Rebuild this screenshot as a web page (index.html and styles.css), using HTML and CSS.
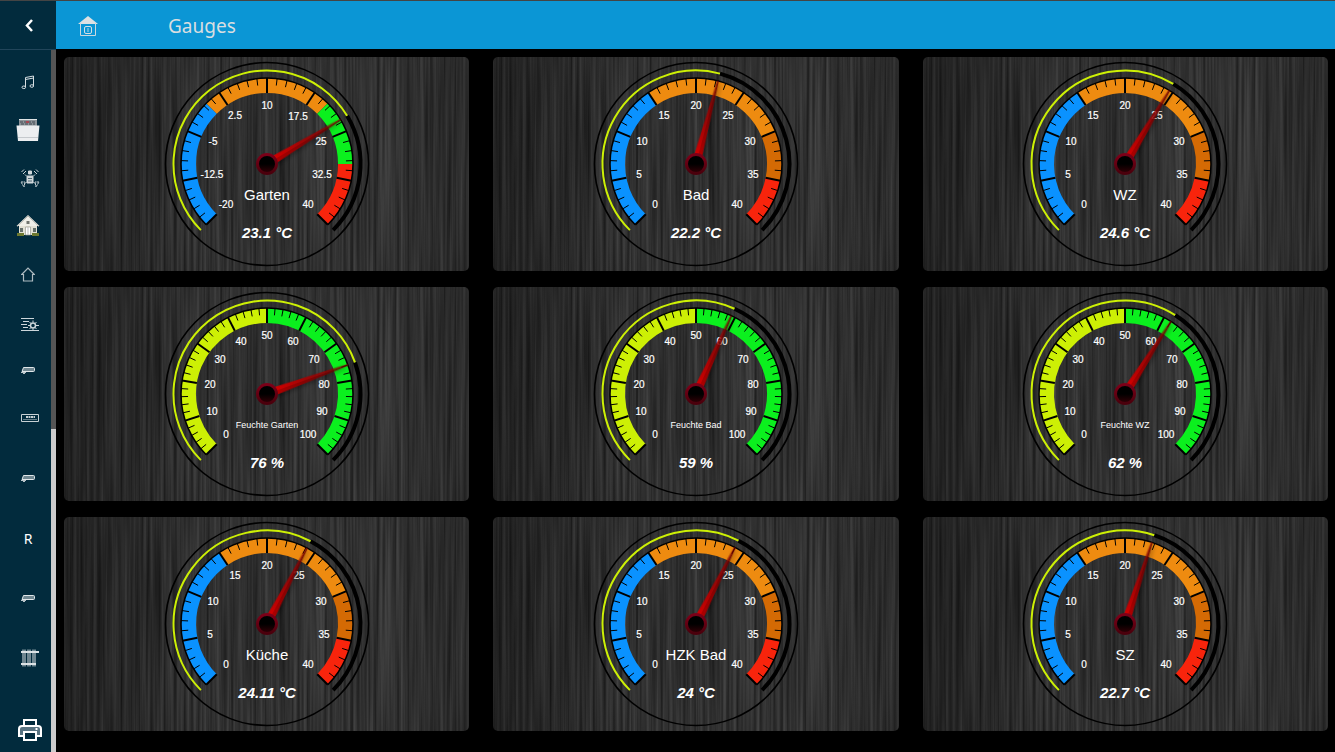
FILE: index.html
```
<!DOCTYPE html>
<html lang="de">
<head>
	<meta charset="utf-8">
	<meta name="viewport" content="width=device-width, initial-scale=1">
	<title>Gauges</title>
	<link rel="stylesheet" href="styles.css">
</head>
<body>
	<div class="sidebar">
		<button class="toggle" type="button" aria-label="Menu">
			<svg width="24" height="24" viewBox="0 0 24 24"><path d="M15 7l-5 5.500 5 5.500" fill="none" stroke="#fff" stroke-width="2.500"/></svg>
		</button>
		<div class="scroller">
			<nav class="menu">
				<a href="#musik" aria-label="Musik">
					<svg width="14" height="16" viewBox="0 0 14 16" fill="none" stroke="#d5dde1"><path d="M4.500 13V3.500L12.500 2v10M4.500 5.500l8-1.500"/><ellipse cx="2.800" cy="13.300" rx="1.800" ry="1.300"/><ellipse cx="10.800" cy="12" rx="1.800" ry="1.300"/></svg>
				</a>
				<a href="#spueler" aria-label="Geschirrspüler">
					<svg width="24" height="24" viewBox="0 0 24 24"><path d="M3 1h18v7H3z" fill="#8d9499"/><path d="M3 1.500h18" stroke="#dfe3e5"/><path d="M4 4h16M5 6h14" stroke="#414950" stroke-dasharray="3 1"/><path d="M10 3h3v2h-3z" fill="#a54752"/><path d="M.500 7.500h23L22 23H2z" fill="#eceef0"/><path d="M2 19.500h20" stroke="#c5c9cd"/></svg>
				</a>
				<a href="#drohne" aria-label="Roboter">
					<svg class="right" width="20" height="20" viewBox="0 0 20 20" fill="none" stroke="#cfd7da"><path d="M8.500 3h3v3h-3zM7 8h6v7H7z" fill="#cfd7da"/><path d="M8 10.500h4M8 13h4" stroke="#4d6672"/><path d="M1.500 4L4 1.500M3 6l3-3M16 1.500L18.500 4M14 3l3 3M6.500 8L5 6.500M13.500 8L15 6.500M6.500 14L5 15.500M13.500 14l1.500 1.500"/><path d="M1 14h4l-1 5zM19 14h-4l1 5z" stroke-dasharray="2 .5"/></svg>
				</a>
				<a href="#haus" aria-label="Haus">
					<svg width="24" height="24" viewBox="0 0 24 24"><path d="M3 11h18v10H3z" fill="#e3e1d5"/><path d="M12 1l11.500 11H.500z" fill="#f0efe8"/><path d="M12 2L1 12.500M12 2l11 10.500" stroke="#b4b4ae" fill="none"/><path d="M10.500 7h3v3h-3z" fill="#71746f"/><path d="M4 14h3v4H4zM17 14h3v4h-3z" fill="#66706b"/><path d="M9.500 13h5v8h-5z" fill="#fff" stroke="#999b91" stroke-width=".7"/><path d="M12 13v8" stroke="#bbb"/><path d="M1 19h7v3H1zM16 19h7v3h-7z" fill="#6d7930"/></svg>
				</a>
				<a href="#home" aria-label="Home">
					<svg width="14" height="15" viewBox="0 0 14 15" fill="none" stroke="#aebbc1" stroke-width="1.200"><path d="M.700 7.500L7 1l6.300 6.500H11.500V14h-9V7.500z"/></svg>
				</a>
				<a href="#solar" aria-label="Licht">
					<svg class="right low" width="18" height="15" viewBox="0 0 18 15" fill="none" stroke="#ccd6da"><path d="M0 1.500h13M2 4.500h6M0 7.500h6M2 10.500h5M0 13.500h18"/><circle cx="12" cy="8.500" r="2.500" stroke-width="1.500"/><path d="M12 3.500v2M12 11.500v2M7 8.500h2M15 8.500h3M8.500 5l1.500 1.500M15.500 5L14 6.500M15.500 12L14 10.500M8.500 12l1.500-1.500"/></svg>
				</a>
				<a href="#klima1" aria-label="Klima 1">
					<svg width="16" height="8" viewBox="0 0 16 8"><use href="#klima"/></svg>
				</a>
				<a href="#receiver" aria-label="Receiver">
					<svg class="right" width="18" height="8" viewBox="0 0 18 8" fill="none" stroke="#c7d0d4"><path d="M.500.500h17v7H.500z"/><path d="M5 3h9" stroke-width="2" stroke-dasharray="2 .5"/><path d="M2.500 5.500h13" stroke-dasharray="1 1"/></svg>
				</a>
				<a class="spaced" href="#klima2" aria-label="Klima 2">
					<svg width="16" height="8" viewBox="0 0 16 8"><use href="#klima"/></svg>
				</a>
				<a class="spaced" href="#r">R</a>
				<a class="spaced" href="#klima3" aria-label="Klima 3">
					<svg width="16" height="8" viewBox="0 0 16 8"><use href="#klima"/></svg>
				</a>
				<a class="spaced" href="#heizung" aria-label="Heizung">
					<svg class="right" width="18" height="20" viewBox="0 0 18 20" fill="none" stroke="#dbe2e5"><path d="M0 4h18M0 16h15" stroke-width="2"/><path d="M2 1.500v17M4 1.500v17M7 1.500v17M9 1.500v17M12 1.500v17M14 1.500v17"/></svg>
				</a>
				<a class="spaced wide" href="#drucker" aria-label="Drucker">
					<svg class="right" width="24" height="22" viewBox="0 0 24 22" fill="none" stroke="#fff" stroke-width="2"><path d="M6 6V1h12v5"/><path d="M6 17H1V10q0-3 3-3h16q3 0 3 3v7h-5" fill="#587381"/><path d="M6 13h12v8H6z" fill="#022b3d"/><path d="M17.500 10h2"/></svg>
				</a>
			</nav>
			<div class="scrollbar"><div class="thumb"></div></div>
		</div>
	</div>

	<div class="page">
		<header class="topbar">
			<svg width="20" height="22" viewBox="0 0 20 22"><path d="M10 1l10 8H0z" fill="#dde1e3"/><path d="M2.500 8v12.500h15V8" fill="none" stroke="#c9d8df"/><rect x="6.500" y="11.500" width="7" height="7" rx="1.500" fill="none" stroke="#d7e0e4"/><path d="M10 13v4" stroke="#b7d5e3"/></svg>
			<h1>Gauges</h1>
		</header>
		<main class="grid" id="gauges"></main>
	</div>

	<svg class="defs" width="0" height="0" aria-hidden="true">
		<defs>
			<g id="klima"><path d="M3.500 1.500h10q1 0 1 1v2q0 1-1 1H2z" fill="#708791" stroke="#e0e7ea"/><path d="M1 6.500h5M3 7.500h2" stroke="#b9c5ca"/></g>
			<linearGradient id="needleLight" x1="0" y1="0" x2="0" y2="1"><stop offset="0" stop-color="#7d0000" stop-opacity=".7"/><stop offset="1" stop-color="#d20000"/></linearGradient>
			<linearGradient id="needleDark" x1="0" y1="0" x2="0" y2="1"><stop offset="0" stop-color="#5c0000" stop-opacity=".8"/><stop offset="1" stop-color="#b00000"/></linearGradient>
			<linearGradient id="ring" x1="0" y1="0" x2="0" y2="1"><stop offset="0" stop-color="#7c0018"/><stop offset="1" stop-color="#4a000c"/></linearGradient>
			<linearGradient id="hub" x1="0" y1="0" x2="0" y2="1"><stop offset=".5" stop-color="#000"/><stop offset="1" stop-color="#350006"/></linearGradient>
		</defs>
	</svg>
	<script src="gauges.js"></script>
</body>
</html>
```

FILE: styles.css
```
* {
	box-sizing: border-box;
}

body {
	margin: 0;
	display: flex;
	height: 100vh;
	overflow: hidden;
	background: #000;
	border-top: 1px solid #444;
	color: #fff;
	font-family: "Noto Sans", sans-serif;
}

/* sidebar */
.sidebar {
	display: flex;
	flex-direction: column;
	flex: none;
	width: 56px;
	background: #022b3d;
}

.toggle {
	flex: none;
	height: 49px;
	padding: 0 0 0 1px;
	border: 0;
	border-bottom: 1px solid #21455a;
	background: none;
}

.toggle svg {
	display: block;
	margin: auto;
}

.scroller {
	display: flex;
	flex: 1;
	min-height: 0;
}

.menu {
	flex: 1;
	padding-top: 8px;
	overflow: hidden;
}

.menu a {
	display: flex;
	align-items: center;
	justify-content: center;
	height: 48px;
	padding-left: 5px;
	color: #fff;
	font-size: 14px;
	text-decoration: none;
}

.menu .spaced {
	margin-top: 12px;
}

.menu .wide {
	margin-top: 24px;
}

.menu .right {
	margin-left: 4px;
}

.menu .low {
	margin-top: 4px;
}

.scrollbar {
	width: 5px;
	background: #ccc;
}

.thumb {
	height: 54%;
	background: #555;
}

/* content */
.page {
	display: flex;
	flex-direction: column;
	flex: 1;
	min-width: 0;
}

.topbar {
	display: flex;
	align-items: center;
	flex: none;
	gap: 70px;
	height: 48px;
	padding: 2px 22px 0;
	background: #0b96d5;
}

.topbar h1 {
	margin: 0;
	color: #d9dee1;
	font-size: 19px;
	font-weight: 400;
}

.grid {
	display: grid;
	grid-template-columns: repeat(3, 1fr);
	gap: 16px 24px;
	padding: 8px 7px 8px 8px;
}

.panel {
	display: flex;
	align-items: center;
	justify-content: center;
	padding: 4px;
	border-radius: 5px;
	/* brushed metal, lit from the middle */
	background:
		linear-gradient(90deg, rgba(0, 0, 0, .3), transparent 35%, transparent 80%, rgba(0, 0, 0, .12)),
		#2b2b2b url("data:image/svg+xml,%3Csvg xmlns='http://www.w3.org/2000/svg' width='420' height='214'%3E%3Cfilter id='n' x='0' y='0' width='100%25' height='100%25' color-interpolation-filters='sRGB'%3E%3CfeTurbulence type='fractalNoise' baseFrequency='.3 .005' numOctaves='3' seed='4'/%3E%3CfeColorMatrix values='.24 0 0 0 .07 .24 0 0 0 .07 .24 0 0 0 .07 0 0 0 0 1'/%3E%3C/filter%3E%3Crect width='420' height='214' filter='url(%23n)'/%3E%3C/svg%3E");
	background-size: cover;
}

.gauge {
	display: block;
	width: 206px;
	height: 206px;
	overflow: visible;
	font-family: "Liberation Sans", Arial, sans-serif;
	fill: #fff;
	text-anchor: middle;
}

.gauge .border {
	fill: none;
	stroke: #000;
	stroke-width: 1.6;
}

.gauge .track,
.gauge .progress,
.gauge .zone {
	fill: none;
}

.gauge .track {
	stroke: #000;
	stroke-width: 4;
}

.gauge .progress {
	stroke: #cdf005;
	stroke-width: 2;
}

.gauge .zone {
	stroke-width: 15;
}

.gauge .edge {
	fill: none;
	stroke: #000;
	stroke-width: 1.5;
}

.gauge .major {
	stroke: #000;
	stroke-width: 2;
}

.gauge .minor {
	stroke: #000;
	stroke-width: 1;
}

.gauge .number {
	font-size: 10px;
	stroke: #fff;
	stroke-width: .2;
}

.gauge .name {
	font-size: 15px;
}

.gauge .name.small {
	font-size: 9px;
}

.gauge .value {
	font-size: 15px;
	font-style: italic;
	font-weight: 700;
}

.gauge .needle {
	filter: drop-shadow(2px 2px 2px rgba(0, 0, 0, .4));
}

.defs {
	position: absolute;
}
```

FILE: gauges.js
```
var BLUE = '#0a92ff', ORANGE = '#ee8b10', DARK = '#d46a04', RED = '#f8240c', GREEN = '#0bf01e', LIME = '#cdf005';

var room = { min: 0, max: 40, step: 5, zones: [[0, 15, BLUE], [15, 30, ORANGE], [30, 35, DARK], [35, 40, RED]] };
var outside = { min: -20, max: 40, step: 7.5, zones: [[-20, 0, BLUE], [0, 20, ORANGE], [20, 30, GREEN], [30, 40, RED]] };
var humidity = { min: 0, max: 100, step: 10, small: true, zones: [[0, 50, LIME], [50, 100, GREEN]] };

var gauges = [
	{ name: 'Garten', value: 23.1, unit: '°C', scale: outside },
	{ name: 'Bad', value: 22.2, unit: '°C', scale: room },
	{ name: 'WZ', value: 24.6, unit: '°C', scale: room },
	{ name: 'Feuchte Garten', value: 76, unit: '%', scale: humidity },
	{ name: 'Feuchte Bad', value: 59, unit: '%', scale: humidity },
	{ name: 'Feuchte WZ', value: 62, unit: '%', scale: humidity },
	{ name: 'Küche', value: 24.11, unit: '°C', scale: room },
	{ name: 'HZK Bad', value: 24, unit: '°C', scale: room },
	{ name: 'SZ', value: 22.7, unit: '°C', scale: room }
];

// the dial covers 270 degrees, 0 points up
function angle(scale, v) {
	return (v - scale.min) / (scale.max - scale.min) * 270 - 135;
}

function point(r, deg) {
	var a = deg * Math.PI / 180;
	return (r * Math.sin(a)).toFixed(2) + ' ' + (-r * Math.cos(a)).toFixed(2);
}

function arc(cls, r, from, to, color) {
	var big = to - from > 180 ? 1 : 0;
	return '<path class="' + cls + '" d="M' + point(r, from) + 'A' + r + ' ' + r + ' 0 ' + big + ' 1 ' + point(r, to) + '"' +
		(color ? ' stroke="' + color + '"' : '') + '/>';
}

function tick(cls, r1, r2, deg) {
	return '<path class="' + cls + '" d="M' + point(r1, deg) + 'L' + point(r2, deg) + '"/>';
}

function text(cls, x, y, str) {
	return '<text class="' + cls + '" x="' + x + '" y="' + y + '">' + str + '</text>';
}

function draw(g) {
	var s = g.scale, now = angle(s, g.value), html = '';

	html += '<circle class="border" r="101.500"/>';
	html += arc('track', 93.5, now, 135);
	html += arc('progress', 93.5, -135, now);
	s.zones.forEach(function (z) {
		html += arc('zone', 78.5, angle(s, z[0]), angle(s, z[1]), z[2]);
	});
	html += arc('edge', 86, -135, 135);

	var majors = (s.max - s.min) / s.step;
	for (var i = 0; i <= majors * 5; i++) {
		var deg = i * 270 / (majors * 5) - 135;
		if (i % 5) {
			html += tick('minor', 79, 86, deg);
			continue;
		}
		html += tick('major', 71, 86, deg);
		// wide numbers move inwards a little
		var label = String(s.min + i / 5 * s.step);
		var p = point(label.length > 3 ? 56 : 58, deg).split(' ');
		html += text('number', Math.round(p[0]), Math.round(p[1]) + 3, label);
	}

	html += text(s.small ? 'name small' : 'name', 0, s.small ? 34 : 36, g.name);
	html += text('value', 0, 74, g.value + ' ' + g.unit);

	html += '<g class="needle" transform="rotate(' + now.toFixed(2) + ')">' +
		'<path fill="url(#needleLight)" d="M-4-9L-1-86H0V-9z"/>' +
		'<path fill="url(#needleDark)" d="M4-9L1-86H0V-9z"/></g>';
	html += '<circle r="9.500" fill="url(#hub)" stroke="url(#ring)" stroke-width="3"/>';

	return '<section class="panel"><svg class="gauge" viewBox="-103 -103 206 206" role="img" aria-label="' + g.name + '">' + html + '</svg></section>';
}

document.getElementById('gauges').innerHTML = gauges.map(draw).join('');
```
